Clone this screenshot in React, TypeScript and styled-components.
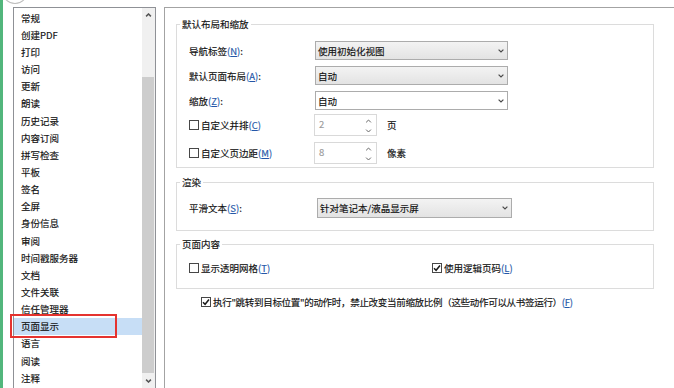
import React from 'react';
import styled, { createGlobalStyle } from 'styled-components';

const Global = createGlobalStyle`
  html, body { margin: 0; padding: 0; background: #fff; }
  body {
    font-family: "Noto Sans CJK SC", "Microsoft YaHei", sans-serif;
    font-size: 9.5px;
    color: #111;
    -webkit-text-stroke: 0.15px currentColor;
  }
  * { box-sizing: border-box; }
`;

const Screen = styled.div`
  position: relative;
  width: 674px;
  height: 388px;
  overflow: hidden;
  display: flex;
  align-items: flex-start;
  background: #fff;
`;

const Stripe = styled.div`
  flex: none;
  width: 3px;
  height: 388px;
  background: #52b67c;
`;

const Lens = styled.div`
  position: absolute;
  left: 1px;
  top: -27px;
  width: 28px;
  height: 31px;
  border-radius: 50%;
  border: 1px solid #bdbdbd;
  background: #fff;
`;

/* ---------- left list ---------- */
const ListBox = styled.div`
  flex: none;
  margin: 7px 0 0 10px;
  width: 143px;
  height: 392px;
  border: 1px solid #8f9196;
  display: flex;
`;

const Items = styled.ul`
  list-style: none;
  margin: 0;
  padding: 1.7px 0 0;
  flex: 1;
`;

const Item = styled.li<{ $selected?: boolean }>`
  position: relative;
  height: 17.15px;
  line-height: 17.15px;
  padding-left: 7px;
  white-space: nowrap;
  background: ${p => (p.$selected ? '#c7def6' : 'transparent')};
`;

const Annotation = styled.span`
  position: absolute;
  left: -4px;
  top: -4px;
  width: 107px;
  height: 24px;
  border: 2px solid #e5332f;
  pointer-events: none;
`;

const ScrollBar = styled.div`
  flex: none;
  width: 13px;
  background: #f0f0f0;
  display: flex;
  flex-direction: column;
`;

const ScrollButton = styled.div<{ $h: number }>`
  height: ${p => p.$h}px;
  display: flex;
  align-items: center;
  justify-content: center;
`;

const TrackGap = styled.div`
  height: 55px;
`;

const Thumb = styled.div`
  height: 296px;
  margin-right: 1px;
  background: #cdcdcd;
`;

/* ---------- right panel ---------- */
const Panel = styled.div`
  flex: none;
  margin: 7px 0 0 8px;
  width: 530px;
  height: 400px;
  border-top: 1px solid #a3a3a3;
  border-left: 1px solid #a3a3a3;
  padding: 10px 0 0 11px;
`;

const Group = styled.fieldset<{ $mt: number; $pt: number; $pb: number }>`
  margin: ${p => p.$mt}px 0 0;
  width: 478px;
  min-width: 0;
  border: 1px solid #dcdcdc;
  padding: ${p => p.$pt}px 12px ${p => p.$pb}px;
`;

const Legend = styled.legend`
  margin-left: -9px;
  padding: 0 2px;
  line-height: 12px;
  font-size: 9.5px;
`;

const Row = styled.div<{ $mt?: number; $h: number }>`
  display: flex;
  align-items: center;
  height: ${p => p.$h}px;
  margin-top: ${p => p.$mt ?? 0}px;
  white-space: nowrap;
`;

const Cell = styled.div<{ $w: number }>`
  flex: none;
  width: ${p => p.$w}px;
  display: flex;
  align-items: center;
`;

const Key = styled.span`
  color: #2457a8;
  u { text-decoration: underline; text-underline-offset: 1px; }
`;

const Select = styled.div<{ $w: number; $h: number; $editable?: boolean }>`
  flex: none;
  width: ${p => p.$w}px;
  height: ${p => p.$h}px;
  border: 1px solid #acacac;
  background: ${p => (p.$editable ? '#fff' : 'linear-gradient(#f3f3f3, #e3e3e3)')};
  display: flex;
  align-items: center;
  justify-content: space-between;
  padding: 0 3px 0 2px;
  color: #111;
`;

const Spin = styled.div`
  flex: none;
  width: 63px;
  height: 22px;
  border: 1px solid #d9d9d9;
  background: #fff;
  display: flex;
  justify-content: space-between;
  padding: 0 3px 0 4px;
`;

const SpinValue = styled.span`
  color: #9b9b9b;
  line-height: 13px;
  padding-top: 3px;
`;

const SpinArrows = styled.div`
  width: 9px;
  display: flex;
  flex-direction: column;
  align-items: center;
  gap: 6px;
  padding-top: 4px;
`;

const Unit = styled.span`
  margin-left: 10px;
`;

const Check = styled.label`
  display: inline-flex;
  align-items: center;
  gap: 2px;
  white-space: nowrap;
`;

const Box = styled.span`
  flex: none;
  width: 10px;
  height: 10px;
  border: 1px solid #474747;
  background: #fff;
  display: inline-flex;
  align-items: center;
  justify-content: center;
`;

const BottomRow = styled.div`
  margin: 6px 0 0 25px;
  height: 14px;
  display: flex;
  align-items: center;
  letter-spacing: -0.3px;
`;

/* ---------- icons ---------- */
const Chevron = ({ up, w = 6, h = 4, color = '#4a4a4a', sw = 1.2 }: { up?: boolean; w?: number; h?: number; color?: string; sw?: number }) => (
  <svg width={w} height={h} viewBox="0 0 6 4" style={{ display: 'block' }}>
    <path
      d={up ? 'M0.6 3.4 L3 1 L5.4 3.4' : 'M0.6 0.6 L3 3 L5.4 0.6'}
      fill="none"
      stroke={color}
      strokeWidth={sw}
    />
  </svg>
);

const CheckMark = () => (
  <svg width="8" height="8" viewBox="0 0 8 8" style={{ display: 'block' }}>
    <path d="M1 4.2 L3.1 6.3 L7 1.5" fill="none" stroke="#1b1b1b" strokeWidth="1.5" />
  </svg>
);

const Mn = ({ k }: { k: string }) => (
  <Key>
    (<u>{k}</u>)
  </Key>
);

const CheckBox = ({ checked, children }: { checked?: boolean; children: React.ReactNode }) => (
  <Check>
    <Box>{checked && <CheckMark />}</Box>
    <span>{children}</span>
  </Check>
);

const items = [
  '常规', '创建PDF', '打印', '访问', '更新', '朗读', '历史记录', '内容订阅', '拼写检查', '平板',
  '签名', '全屏', '身份信息', '审阅', '时间戳服务器', '文档', '文件关联', '信任管理器', '页面显示',
  '语言', '阅读', '注释',
];

export default function App() {
  return (
    <>
      <Global />
      <Screen>
        <Stripe />
        <Lens />
        <ListBox>
          <Items>
            {items.map(t => (
              <Item key={t} $selected={t === '页面显示'}>
                {t}
                {t === '页面显示' && <Annotation />}
              </Item>
            ))}
          </Items>
          <ScrollBar>
            <ScrollButton $h={14}>
              <Chevron up w={7} h={4} color="#555" sw={1.5} />
            </ScrollButton>
            <TrackGap />
            <Thumb />
            <ScrollButton $h={15}>
              <Chevron w={7} h={4} color="#555" sw={1.5} />
            </ScrollButton>
          </ScrollBar>
        </ListBox>

        <Panel>
          <Group $mt={0} $pt={11} $pb={3}>
            <Legend>默认布局和缩放</Legend>
            <Row $h={19}>
              <Cell $w={126}>导航标签<Mn k="N" />:</Cell>
              <Select $w={193} $h={19}>
                <span>使用初始化视图</span>
                <Chevron />
              </Select>
            </Row>
            <Row $h={19} $mt={6}>
              <Cell $w={126}>默认页面布局<Mn k="A" />:</Cell>
              <Select $w={193} $h={19}>
                <span>自动</span>
                <Chevron />
              </Select>
            </Row>
            <Row $h={19} $mt={6}>
              <Cell $w={126}>缩放<Mn k="Z" />:</Cell>
              <Select $w={193} $h={19} $editable>
                <span>自动</span>
                <Chevron />
              </Select>
            </Row>
            <Row $h={22} $mt={4}>
              <Cell $w={125}>
                <CheckBox>自定义并排<Mn k="C" /></CheckBox>
              </Cell>
              <Spin>
                <SpinValue>2</SpinValue>
                <SpinArrows>
                  <Chevron up w={7} h={4} color="#666" sw={1} />
                  <Chevron w={7} h={4} color="#666" sw={1} />
                </SpinArrows>
              </Spin>
              <Unit>页</Unit>
            </Row>
            <Row $h={22} $mt={6}>
              <Cell $w={125}>
                <CheckBox>自定义页边距<Mn k="M" /></CheckBox>
              </Cell>
              <Spin>
                <SpinValue>8</SpinValue>
                <SpinArrows>
                  <Chevron up w={7} h={4} color="#666" sw={1} />
                  <Chevron w={7} h={4} color="#666" sw={1} />
                </SpinArrows>
              </Spin>
              <Unit>像素</Unit>
            </Row>
          </Group>

          <Group $mt={8} $pt={10} $pb={12}>
            <Legend>渲染</Legend>
            <Row $h={20}>
              <Cell $w={128}>平滑文本<Mn k="S" />:</Cell>
              <Select $w={195} $h={20}>
                <span>针对笔记本/液晶显示屏</span>
                <Chevron />
              </Select>
            </Row>
          </Group>

          <Group $mt={7} $pt={11} $pb={13}>
            <Legend>页面内容</Legend>
            <Row $h={14}>
              <Cell $w={243}>
                <CheckBox>显示透明网格<Mn k="T" /></CheckBox>
              </Cell>
              <CheckBox checked>使用逻辑页码<Mn k="L" /></CheckBox>
            </Row>
          </Group>

          <BottomRow>
            <CheckBox checked>
              执行"跳转到目标位置"的动作时，禁止改变当前缩放比例（这些动作可以从书签运行）<Mn k="F" />
            </CheckBox>
          </BottomRow>
        </Panel>
      </Screen>
    </>
  );
}
